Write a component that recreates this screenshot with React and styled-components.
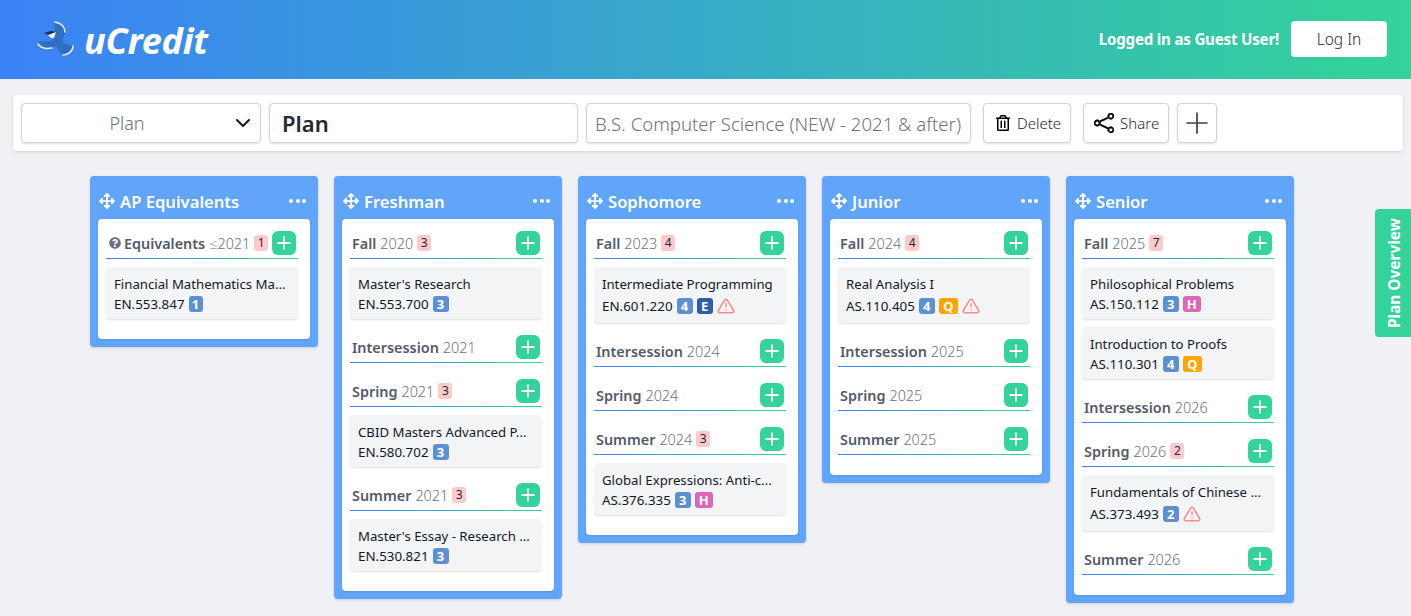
import React from "react";
import styled, { createGlobalStyle } from "styled-components";
import { FaArrowsAlt, FaQuestionCircle, FaRegTrashAlt } from "react-icons/fa";
import { BsShare } from "react-icons/bs";
import { FiAlertTriangle, FiChevronDown, FiPlus } from "react-icons/fi";

const plan = [
  {
    name: "AP Equivalents",
    semesters: [
      {
        term: "Equivalents",
        year: "≤2021",
        credits: 1,
        help: true,
        courses: [{ title: "Financial Mathematics Ma...", code: "EN.553.847", credits: 1 }],
      },
    ],
  },
  {
    name: "Freshman",
    semesters: [
      { term: "Fall", year: "2020", credits: 3, courses: [{ title: "Master's Research", code: "EN.553.700", credits: 3 }] },
      { term: "Intersession", year: "2021" },
      {
        term: "Spring",
        year: "2021",
        credits: 3,
        courses: [{ title: "CBID Masters Advanced P...", code: "EN.580.702", credits: 3 }],
      },
      {
        term: "Summer",
        year: "2021",
        credits: 3,
        courses: [{ title: "Master's Essay - Research ...", code: "EN.530.821", credits: 3 }],
      },
    ],
  },
  {
    name: "Sophomore",
    semesters: [
      {
        term: "Fall",
        year: "2023",
        credits: 4,
        courses: [{ title: "Intermediate Programming", code: "EN.601.220", credits: 4, area: "E", warn: true }],
      },
      { term: "Intersession", year: "2024" },
      { term: "Spring", year: "2024" },
      {
        term: "Summer",
        year: "2024",
        credits: 3,
        courses: [{ title: "Global Expressions: Anti-c...", code: "AS.376.335", credits: 3, area: "H" }],
      },
    ],
  },
  {
    name: "Junior",
    semesters: [
      {
        term: "Fall",
        year: "2024",
        credits: 4,
        courses: [{ title: "Real Analysis I", code: "AS.110.405", credits: 4, area: "Q", warn: true }],
      },
      { term: "Intersession", year: "2025" },
      { term: "Spring", year: "2025" },
      { term: "Summer", year: "2025" },
    ],
  },
  {
    name: "Senior",
    semesters: [
      {
        term: "Fall",
        year: "2025",
        credits: 7,
        courses: [
          { title: "Philosophical Problems", code: "AS.150.112", credits: 3, area: "H" },
          { title: "Introduction to Proofs", code: "AS.110.301", credits: 4, area: "Q" },
        ],
      },
      { term: "Intersession", year: "2026" },
      {
        term: "Spring",
        year: "2026",
        credits: 2,
        courses: [{ title: "Fundamentals of Chinese ...", code: "AS.373.493", credits: 2, warn: true }],
      },
      { term: "Summer", year: "2026" },
    ],
  },
];

const areas = {
  E: { color: "#2f5ea8", width: 16 },
  Q: { color: "#ffa500", width: 19 },
  H: { color: "#e066b3", width: 18 },
};

export default function App() {
  return (
    <Page>
      <GlobalStyle />
      <Header>
        <Brand>
          <Logo />
          <BrandName>uCredit</BrandName>
        </Brand>
        <Account>
          <Greeting>Logged in as Guest User!</Greeting>
          <LoginButton>Log In</LoginButton>
        </Account>
      </Header>

      <Toolbar>
        <PlanSelect>
          <span>Plan</span>
          <FiChevronDown size={24} color="#111827" />
        </PlanSelect>
        <PlanName>Plan</PlanName>
        <DegreeName>B.S. Computer Science (NEW - 2021 &amp; after)</DegreeName>
        <ToolButton $left={11} $right={9}>
          <FaRegTrashAlt size={16} color="#000" />
          Delete
        </ToolButton>
        <ToolButton $left={10} $right={9}>
          <BsShare size={20} color="#000" style={{ strokeWidth: 0.6, stroke: "#000" }} />
          Share
        </ToolButton>
        <AddPlanButton>
          <FiPlus size={34} strokeWidth={1.2} />
        </AddPlanButton>
      </Toolbar>

      <Board>
        {plan.map((year) => (
          <YearColumn key={year.name}>
            <YearHeader>
              <YearTitle>
                <FaArrowsAlt size={16} />
                {year.name}
              </YearTitle>
              <Dots>
                <i />
                <i />
                <i />
              </Dots>
            </YearHeader>
            <YearPanel>
              {year.semesters.map((sem) => (
                <Semester key={sem.term}>
                  <SemesterHeader $help={sem.help}>
                    <SemesterLabel>
                      {sem.help && <FaQuestionCircle size={12} color="#6b7280" style={{ marginRight: 3 }} />}
                      <strong>{sem.term}</strong>
                      <em>{sem.year}</em>
                      {sem.credits && <CreditCount>{sem.credits}</CreditCount>}
                    </SemesterLabel>
                    <AddCourse>
                      <FiPlus size={20} strokeWidth={2.2} />
                    </AddCourse>
                  </SemesterHeader>
                  <Rule />
                  {sem.courses && (
                    <CourseList>
                      {sem.courses.map((course) => (
                        <Course key={course.code}>
                          <CourseTitle>{course.title}</CourseTitle>
                          <CourseMeta>
                            <span>{course.code}</span>
                            <Badge $color="#5d8fd3" $width={course.credits === 1 ? 14 : 16}>
                              {course.credits}
                            </Badge>
                            {course.area && (
                              <Badge $color={areas[course.area].color} $width={areas[course.area].width}>
                                {course.area}
                              </Badge>
                            )}
                            {course.warn && <FiAlertTriangle size={18} color="#fb8a8f" strokeWidth={2} />}
                          </CourseMeta>
                        </Course>
                      ))}
                    </CourseList>
                  )}
                </Semester>
              ))}
            </YearPanel>
          </YearColumn>
        ))}
      </Board>

      <OverviewTab>Plan Overview</OverviewTab>
    </Page>
  );
}

function Logo() {
  return (
    <LogoMark viewBox="0 0 40 40">
      <path
        d="M20 2c6 1 11 5 10 11-1 4-3 6-2 9 2 3 6 2 10 4 1 4-4 9-10 9-3-1-4-6-8-9-2 1-3 2-3 3-5 1-12-1-14-6 3-3 8-1 12-2 4-1 5-3 5-7 0-4-1-8 0-12z"
        fill="#2f6ec0"
      />
      <g fill="none" stroke="#e8eef8" strokeWidth="1.5" strokeLinecap="round">
        <path d="M20 2c6 1 10 5 10 10" />
        <path d="M3 24c3 4 9 5 14 4" />
        <path d="M28 35c5 0 10-4 10-9" />
      </g>
      <path d="M9 13l7-2 6 1-6 4z" fill="#1c2c4a" />
      <path d="M13 15l8-3-2 6-3 0z" fill="#f2f2f0" />
    </LogoMark>
  );
}

const GlobalStyle = createGlobalStyle`
  html, body {
    margin: 0;
    padding: 0;
    overflow: hidden;
  }
  body {
    background: #eff1f5;
    font-family: "Noto Sans", "Open Sans", "Liberation Sans", sans-serif;
  }
`;

const Page = styled.div`
  position: relative;
  height: 616px;
  overflow: hidden;
`;

const Header = styled.header`
  height: 79px;
  display: flex;
  align-items: center;
  justify-content: space-between;
  padding: 0 24px 0 35px;
  background: linear-gradient(to right, #3b82f6, #34d399);
`;

const Brand = styled.div`
  display: flex;
  align-items: center;
  gap: 10px;
`;

const LogoMark = styled.svg`
  width: 40px;
  height: 40px;
`;

const BrandName = styled.div`
  margin: 2px 0 0 -1px;
  color: #fff;
  font-size: 36px;
  font-weight: 700;
  font-style: italic;
  letter-spacing: -0.2px;
  line-height: 44px;
`;

const Account = styled.div`
  display: flex;
  align-items: center;
  gap: 12px;
  margin-bottom: 1px;
`;

const Greeting = styled.div`
  color: #fff;
  font-size: 15.1px;
  font-weight: 700;
  letter-spacing: -0.2px;
`;

const LoginButton = styled.button`
  width: 96px;
  height: 36px;
  border: 0;
  border-radius: 4px;
  background: #fff;
  color: #1f2937;
  font: 300 15.5px "Noto Sans", sans-serif;
`;

const Toolbar = styled.div`
  margin: 16px 8px 0 13px;
  padding: 8px;
  height: 40px;
  display: flex;
  background: #fff;
  border-radius: 4px;
  box-shadow: 0 1px 3px rgba(0, 0, 0, 0.14);
`;

const Field = styled.div`
  box-sizing: border-box;
  height: 40px;
  display: flex;
  align-items: center;
  border: 1px solid #d1d5db;
  border-radius: 4px;
  background: #fff;
  box-shadow: 0 1px 2px rgba(0, 0, 0, 0.12);
`;

const PlanSelect = styled(Field)`
  width: 240px;
  position: relative;
  justify-content: center;
  padding-right: 28px;
  color: #6b7280;
  font-size: 18px;
  font-weight: 300;
  margin-right: 8px;

  svg {
    position: absolute;
    right: 5px;
  }
`;

const PlanName = styled(Field)`
  width: 309px;
  padding-left: 12px;
  color: #1f2937;
  font-size: 22px;
  font-weight: 600;
  margin-right: 8px;
`;

const DegreeName = styled(Field)`
  width: 385px;
  padding-left: 8px;
  color: #6b7280;
  font-size: 18.6px;
  font-weight: 300;
  white-space: nowrap;
`;

const ToolButton = styled(Field)`
  padding: 0 ${(p) => p.$right}px 0 ${(p) => p.$left}px;
  gap: 6px;
  color: #1f2937;
  font-size: 15px;
  font-weight: 300;
  margin-left: 12px;
`;

const AddPlanButton = styled(Field)`
  width: 40px;
  justify-content: center;
  margin-left: 8px;
  color: #374151;
`;

const Board = styled.main`
  display: flex;
  align-items: flex-start;
  gap: 16px;
  padding: 25px 0 0 90px;
`;

const YearColumn = styled.section`
  width: 228px;
  box-sizing: border-box;
  padding: 0 8px 8px;
  border-radius: 4px;
  background: #60a5fa;
  box-shadow: 0 1px 3px rgba(0, 0, 0, 0.14);
`;

const YearHeader = styled.div`
  height: 43px;
  padding: 7px 4px 0 1px;
  box-sizing: border-box;
  display: flex;
  align-items: center;
  justify-content: space-between;
  color: #fff;
`;

const YearTitle = styled.div`
  display: flex;
  align-items: center;
  gap: 5px;
  font-size: 16.6px;
  font-weight: 600;
`;

const Dots = styled.div`
  display: flex;
  gap: 2.5px;

  i {
    width: 4px;
    height: 4px;
    border-radius: 50%;
    background: #fff;
  }
`;

const YearPanel = styled.div`
  padding: 12px 12px 4px 8px;
  background: #fff;
  border-radius: 4px;
  box-shadow: 0 1px 2px rgba(0, 0, 0, 0.1);
`;

const Semester = styled.div`
  margin-bottom: 16px;
`;

const SemesterHeader = styled.div`
  height: 24px;
  display: flex;
  align-items: center;
  justify-content: space-between;
  padding: 0 2px ${(p) => (p.$help ? "0 3px" : "0 2px")};
`;

const SemesterLabel = styled.div`
  display: flex;
  align-items: center;
  font-size: 14.4px;
  white-space: nowrap;

  strong {
    color: #525b68;
    font-weight: 600;
  }

  em {
    margin-left: 4px;
    color: #6b7280;
    font-style: normal;
    font-weight: 300;
  }
`;

const CreditCount = styled.span`
  margin-left: 4px;
  min-width: 14px;
  height: 16px;
  border-radius: 3px;
  background: #fecaca;
  color: #1f2937;
  font-size: 12px;
  line-height: 16px;
  text-align: center;
`;

const AddCourse = styled.div`
  width: 24px;
  height: 24px;
  display: flex;
  align-items: center;
  justify-content: center;
  border-radius: 6px;
  background: #34d399;
  color: #fff;
`;

const Rule = styled.div`
  margin-top: 3px;
  height: 1px;
  background: linear-gradient(to right, #3b82f6, #34d399);
`;

const CourseList = styled.div`
  display: flex;
  flex-direction: column;
  gap: 8px;
  margin-top: 8px;
`;

const Course = styled.article`
  padding: 7px 8px 5px;
  border-radius: 4px;
  background: #f3f4f6;
  box-shadow: 0 1px 2px rgba(0, 0, 0, 0.12);
`;

const CourseTitle = styled.div`
  height: 20px;
  color: #111827;
  font-size: 13.2px;
  line-height: 20px;
  white-space: nowrap;
`;

const CourseMeta = styled.div`
  min-height: 20px;
  display: flex;
  align-items: center;
  gap: 4px;
  color: #111827;
  font-size: 13.35px;

  svg {
    margin: 3px 0;
  }
`;

const Badge = styled.span`
  width: ${(p) => p.$width}px;
  height: 16px;
  border-radius: 3px;
  background: ${(p) => p.$color};
  color: #fff;
  font-size: 13px;
  font-weight: 700;
  line-height: 16px;
  text-align: center;
`;

const OverviewTab = styled.div`
  position: absolute;
  top: 209px;
  right: 0;
  box-sizing: border-box;
  width: 36px;
  height: 128px;
  padding-right: 3px;
  display: flex;
  align-items: center;
  justify-content: center;
  border-radius: 0 4px 4px 0;
  background: #34d399;
  color: #fff;
  font-size: 15.4px;
  font-weight: 700;
  white-space: nowrap;
  writing-mode: vertical-rl;
  transform: rotate(180deg);
`;
